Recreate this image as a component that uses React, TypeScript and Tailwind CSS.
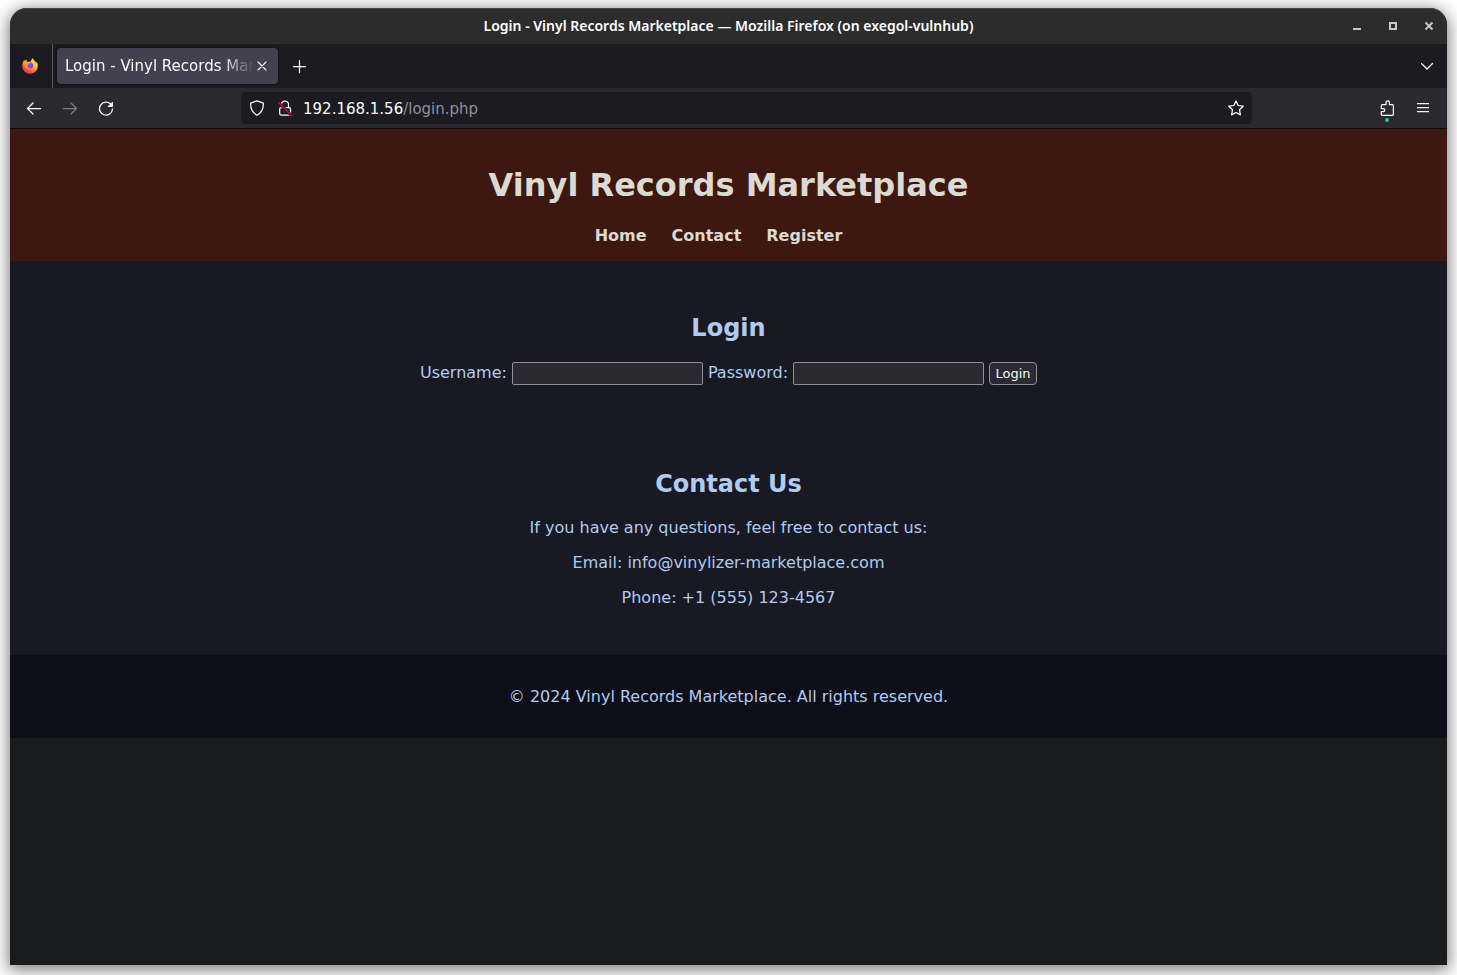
import type { ReactNode } from 'react';

type IconProps = { children: ReactNode; className?: string };

function Icon({ children, className = '' }: IconProps) {
  return (
    <svg
      viewBox="0 0 16 16"
      className={`block size-4 ${className}`}
      fill="none"
      stroke="currentColor"
      strokeWidth="1.25"
      strokeLinecap="round"
      strokeLinejoin="round"
      aria-hidden="true"
    >
      {children}
    </svg>
  );
}

function FirefoxLogo() {
  return (
    <svg viewBox="0 0 16 16" className="block size-4" aria-hidden="true">
      <defs>
        <linearGradient id="flame" x1="0.85" y1="0.05" x2="0.2" y2="1">
          <stop offset="0" stopColor="#fff44f" />
          <stop offset="0.4" stopColor="#ffb52a" />
          <stop offset="0.7" stopColor="#ff5a3a" />
          <stop offset="1" stopColor="#f0159a" />
        </linearGradient>
        <radialGradient id="globe" cx="0.6" cy="0.3" r="0.8">
          <stop offset="0" stopColor="#9059ff" />
          <stop offset="1" stopColor="#5b3fbe" />
        </radialGradient>
      </defs>
      <path
        fill="url(#flame)"
        d="M15.4 5.6c-.3-.9-1-1.7-1.6-2 .4.8.6 1.5.7 2-.9-2.200-2.700-3-3.700-5.400-1.100.7-1.900 2-2 3.400L5.400 4C4.600 3.500 4.600 2.400 4.800 1.600c-.9.4-1.600 1.100-2 1.700-.3-.3-.3-1.200-.2-1.500C1.200 2.900.2 5.400.2 8a7.800 7.800 0 0 0 15.600 0c0-.9-.1-1.700-.4-2.400z"
      />
      <circle cx="8.100" cy="7.600" r="3.100" fill="url(#globe)" />
      <path
        fill="#ff9a1f"
        d="M2.500 5.200C3.700 4 5.300 4 6.200 4.600c.5.2 1.200.2 1.700.3 0 .7-1.500 1.100-1.800 1.400-.3.400.200 1.300-.6 1.600 0 2 2.200 2.600 3.700 1.700-.8 1.700-3.600 2.200-5.300.4C2.800 9 2.200 7 2.500 5.200z"
      />
    </svg>
  );
}

function TitleBar() {
  return (
    <div className="grid h-9 grid-cols-[1fr_auto_1fr] items-center rounded-t-[17px] border-t border-[#444444] bg-[#2c2c2c] pb-px font-['Noto_Sans',sans-serif]">
      <span />
      <span className="text-[14px] font-semibold leading-5 text-white">
        Login - Vinyl Records Marketplace — Mozilla Firefox (on exegol-vulnhub)
      </span>
      <div className="flex justify-end gap-5 pr-[10px] text-[#c8c8c8]">
        <button type="button" aria-label="Minimize">
          <Icon><path d="M4 11h8" strokeWidth="2" strokeLinecap="butt" /></Icon>
        </button>
        <button type="button" aria-label="Maximize">
          <Icon><path d="M5 5h6v6H5z" strokeWidth="2" strokeLinejoin="miter" /></Icon>
        </button>
        <button type="button" aria-label="Close window">
          <Icon><path d="M4.500 4.500l7 7M11.500 4.500l-7 7" strokeWidth="2" strokeLinecap="butt" /></Icon>
        </button>
      </div>
    </div>
  );
}

function TabStrip() {
  return (
    <div className="flex h-11 items-center bg-[#1c1b22] text-[#fbfbfe]">
      <div className="flex h-full w-[43px] items-center border-r border-[#5b5a60] pl-3">
        <FirefoxLogo />
      </div>
      <div className="ml-1 flex h-9 w-[221px] items-center rounded bg-[#42414d] pl-2 pr-2 shadow-[0_0_3px_rgba(0,0,0,0.7)]">
        <span className="flex-1 overflow-hidden whitespace-nowrap text-[15px] leading-5 [mask-image:linear-gradient(to_left,transparent,black_32px)]">
          Login - Vinyl Records Marketplace
        </span>
        <button type="button" aria-label="Close tab">
          <Icon><path d="M4 4l8 8M12 4l-8 8" strokeWidth="1.100" /></Icon>
        </button>
      </div>
      <button type="button" aria-label="New tab" className="ml-[13px]">
        <Icon><path d="M8.500 2.500v12M2.500 8.500h12" /></Icon>
      </button>
      <button type="button" aria-label="List all tabs" className="ml-auto mr-3">
        <Icon><path d="M2.500 5.500L8 11l5.500-5.500" /></Icon>
      </button>
    </div>
  );
}

function Toolbar() {
  return (
    <div className="flex h-[41px] items-center border-b border-[#0c0c0d] bg-[#2b2a33] px-4 text-[#fbfbfe]">
      <div className="flex gap-5">
        <button type="button" aria-label="Back">
          <Icon><path d="M14.500 8.500h-13M7 3l-5.500 5.500L7 14" /></Icon>
        </button>
        <button type="button" aria-label="Forward" className="text-[#7d7c83]">
          <Icon><path d="M1.500 8.500h13M9 3l5.500 5.500L9 14" /></Icon>
        </button>
        <button type="button" aria-label="Reload">
          <Icon>
            <path d="M12.800 4.200A6.500 6.500 0 1 0 14.500 9" />
            <path d="M14.500 2.500v4H10.500z" fill="currentColor" strokeWidth="1" />
          </Icon>
        </button>
      </div>
      <div className="ml-[127px] flex h-8 flex-1 items-center rounded bg-[#1c1b22] px-2">
        <Icon>
          <path d="M8 .8l6.300 2.300c.3 4.700-1.200 9.500-6.300 12.100C2.900 12.600 1.400 7.800 1.700 3.100z" />
        </Icon>
        <Icon className="ml-3">
          <path d="M4.500 7V4.500a3.500 3.500 0 0 1 7 0V7" />
          <rect x="2.700" y="7.500" width="10.800" height="7.500" rx="1.500" />
          <path d="M1.500 2.500l13 13" stroke="#1c1b22" strokeWidth="3" />
          <path d="M1.500 2.500l13 13" stroke="#e8002f" strokeWidth="1.300" />
        </Icon>
        <span className="ml-[10px] flex-1 pt-0.5 text-[15px] leading-5 text-[#8f8f99]">
          <span className="text-[#fbfbfe]">192.168.1.56</span>/login.php
        </span>
        <button type="button" aria-label="Bookmark this page">
          <Icon>
            <path d="M8 1l2.100 4.500 5.100.7-3.700 3.500.9 5.200L8 12.500l-4.400 2.400.9-5.200L.8 6.200l5.100-.7z" />
          </Icon>
        </button>
      </div>
      <div className="ml-[127px] flex gap-5">
        <button type="button" aria-label="Extensions" className="relative">
          <Icon>
            <path d="M3.300 15.300h10.100a1 1 0 0 0 1-1V5.700a1 1 0 0 0-1-1h-3V2.500a1.700 1.700 0 0 0-3.400 0v2.200H3.300a1 1 0 0 0-1 1v2.800h1.900a1.600 1.600 0 0 1 0 3.200H2.300v2.600a1 1 0 0 0 1 1z" />
          </Icon>
          <span className="absolute left-[6px] top-[18px] size-1 rounded-full bg-[#2ac3a2]" />
        </button>
        <button type="button" aria-label="Open application menu">
          <Icon><path d="M2 3.500h12M2 7.500h12M2 11.500h12" strokeLinecap="butt" /></Icon>
        </button>
      </div>
    </div>
  );
}

const fieldClass = 'h-[23px] w-[191px] rounded-xs border border-[#8f8f9d] bg-[#2b2a33] px-1 text-[13px] text-white';

function LoginPage() {
  return (
    <div className="flex-1 text-center text-[16px] leading-[19px] text-[#b0cbef]">
      <header className="bg-[#3c1810] pb-4 pt-[37px] text-[#ddd9d3]">
        <h1 className="text-[32px] font-bold leading-[38px]">Vinyl Records Marketplace</h1>
        <nav className="mt-[22px] flex justify-center gap-[25px] pr-5 font-bold">
          <a href="#home">Home</a>
          <a href="#contact">Contact</a>
          <a href="#register">Register</a>
        </nav>
      </header>
      <main className="bg-[#191923] pb-12 pt-[53px]">
        <section>
          <h2 className="text-[24px] font-bold leading-7">Login</h2>
          <form className="mt-5 flex flex-wrap items-center justify-center gap-[5px]">
            <label htmlFor="username" className="pb-0.5">Username:</label>
            <input id="username" type="text" className={fieldClass} />
            <label htmlFor="password" className="pb-0.5">Password:</label>
            <input id="password" type="password" className={fieldClass} />
            <button
              type="button"
              className="h-[23px] w-12 rounded border border-[#8f8f9d] bg-[#2b2a33] text-[13px] leading-5 text-[#fbfbfe]"
            >
              Login
            </button>
          </form>
        </section>
        <section id="contact" className="mt-[85px]">
          <h2 className="mb-5 text-[24px] font-bold leading-7">Contact Us</h2>
          <div className="flex flex-col gap-4">
            <p>If you have any questions, feel free to contact us:</p>
            <p>Email: info@vinylizer-marketplace.com</p>
            <p>Phone: +1 (555) 123-4567</p>
          </div>
        </section>
      </main>
      <footer className="bg-[#0e0e18] py-8">
        <p>© 2024 Vinyl Records Marketplace. All rights reserved.</p>
      </footer>
    </div>
  );
}

export default function App() {
  return (
    <div className="flex min-h-screen flex-col bg-white px-[10px] pb-[10px] pt-2 font-['DejaVu_Sans',sans-serif]">
      <div className="flex flex-1 flex-col rounded-t-[17px] bg-[#1a1b1c] shadow-[0_3px_16px_2px_rgba(0,0,0,0.5)]">
        <TitleBar />
        <TabStrip />
        <Toolbar />
        <LoginPage />
      </div>
    </div>
  );
}
